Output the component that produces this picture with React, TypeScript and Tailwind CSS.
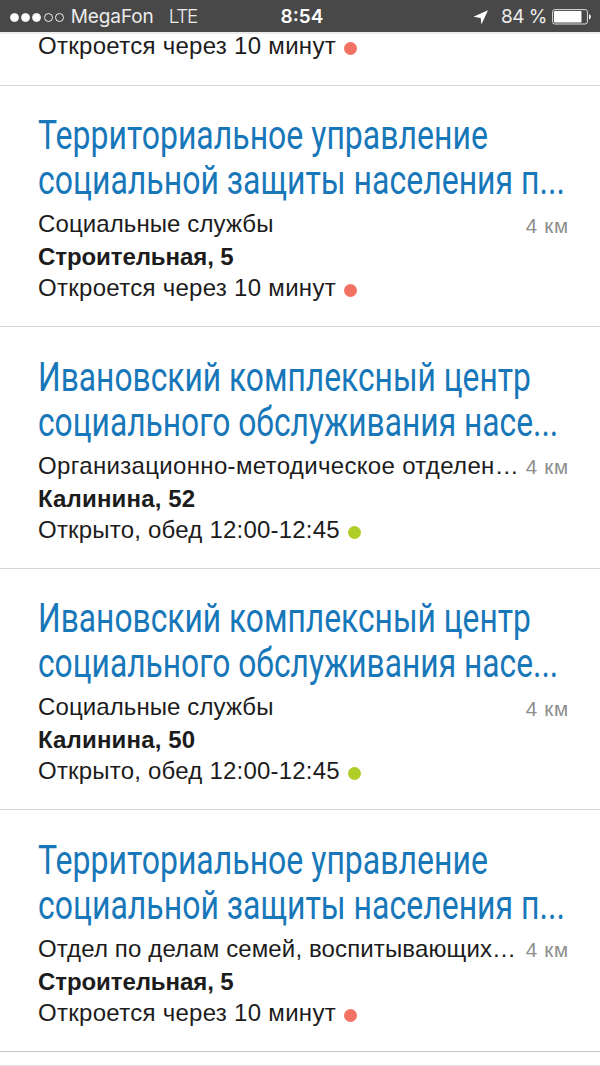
import clsx from "clsx";

interface Place {
  title: [string, string];
  titleScale: string;
  category: string;
  categoryTracking: string;
  address: string;
  addressTracking: string;
  hours: string;
  distance: string;
  open: boolean;
}

const places: Place[] = [
  {
    title: ["Территориальное управление", "социальной защиты населения п..."],
    titleScale: "scale-x-[0.8]",
    category: "Социальные службы",
    categoryTracking: "tracking-[0.1px]",
    address: "Строительная, 5",
    addressTracking: "tracking-[-0.08px]",
    hours: "Откроется через 10 минут",
    distance: "4 км",
    open: false,
  },
  {
    title: ["Ивановский комплексный центр", "социального обслуживания насе..."],
    titleScale: "scale-x-[0.794]",
    category: "Организационно-методическое отделен…",
    categoryTracking: "tracking-[0.33px]",
    address: "Калинина, 52",
    addressTracking: "tracking-[0.16px]",
    hours: "Открыто, обед 12:00-12:45",
    distance: "4 км",
    open: true,
  },
  {
    title: ["Ивановский комплексный центр", "социального обслуживания насе..."],
    titleScale: "scale-x-[0.794]",
    category: "Социальные службы",
    categoryTracking: "tracking-[0.1px]",
    address: "Калинина, 50",
    addressTracking: "tracking-[0.16px]",
    hours: "Открыто, обед 12:00-12:45",
    distance: "4 км",
    open: true,
  },
  {
    title: ["Территориальное управление", "социальной защиты населения п..."],
    titleScale: "scale-x-[0.8]",
    category: "Отдел по делам семей, воспитывающих…",
    categoryTracking: "tracking-[0.13px]",
    address: "Строительная, 5",
    addressTracking: "tracking-[-0.08px]",
    hours: "Откроется через 10 минут",
    distance: "4 км",
    open: false,
  },
];

function StatusBar() {
  return (
    <header className="grid h-8 shrink-0 grid-cols-3 items-center bg-[#484848] font-['Inter','Liberation_Sans',sans-serif] text-[19px] leading-8 text-[#ececec]">
      <div className="flex items-center whitespace-nowrap pl-2.5 pt-px">
        <div className="flex gap-[2.2px]">
          {[1, 2, 3, 4, 5].map((n) => (
            <span
              key={n}
              className={clsx(
                "size-[9px] rounded-full border border-[#ececec]",
                n <= 3 && "bg-white"
              )}
            />
          ))}
        </div>
        <span className="ml-[7px] tracking-[-0.1px]">MegaFon</span>
        <span className="ml-[15px] font-light tracking-[-1.4px]">LTE</span>
      </div>
      <div className="pl-1 pt-px text-center font-semibold text-white">8:54</div>
      <div className="flex items-center justify-end whitespace-nowrap pr-2 pt-px">
        <svg width="16" height="15" viewBox="0 0 16 15" className="mr-3">
          <path d="M15 .2 8.4 14.6 7.7 7.9.4 6.8Z" fill="#fff" />
        </svg>
        <span className="tracking-[-0.5px]">84 %</span>
        <svg width="40" height="16" viewBox="0 0 40 16" className="ml-[5px]">
          <rect x=".6" y=".6" width="34.8" height="14.4" rx="2.2" fill="none" stroke="#ddd" />
          <rect x="2" y="2" width="27.5" height="11.6" rx=".8" fill="#fff" />
          <path d="M37 5.2q1.8.4 1.8 2.6T37 10.4Z" fill="#fff" />
        </svg>
      </div>
    </header>
  );
}

function Hours({ text, open }: { text: string; open: boolean }) {
  return (
    <div className="flex h-[30px] items-center whitespace-nowrap leading-[30px]">
      <span className={open ? "tracking-[0.21px]" : "tracking-[0.29px]"}>{text}</span>
      <span
        className={clsx(
          "ml-2 mt-[5px] size-[13px] rounded-full",
          open ? "bg-[#b0cc26]" : "bg-[#f27364]"
        )}
      />
    </div>
  );
}

function PlaceCard({ place }: { place: Place }) {
  return (
    <li className="h-[241.4px] border-t border-[#d6d7da] pl-[38px] pr-8 pt-[27.4px]">
      <h2 className="whitespace-nowrap font-['Roboto','Liberation_Sans',sans-serif] text-[40px] leading-[45px] text-[#1777b9]">
        {place.title.map((line) => (
          <span key={line} className={clsx("block w-fit origin-left", place.titleScale)}>
            {line}
          </span>
        ))}
      </h2>
      <div className="mt-1 flex h-[33px] items-center justify-between whitespace-nowrap leading-[33px]">
        <span className={place.categoryTracking}>{place.category}</span>
        <span className="-mr-px mt-[3px] text-[20.5px] tracking-[0.8px] text-[#8e8e8e]">
          {place.distance}
        </span>
      </div>
      <div className={clsx("h-[33px] whitespace-nowrap font-bold leading-[33px]", place.addressTracking)}>
        {place.address}
      </div>
      <Hours text={place.hours} open={place.open} />
    </li>
  );
}

export default function App() {
  return (
    <div className="flex h-[1066px] w-[600px] flex-col overflow-hidden bg-white font-['Liberation_Sans',Arial,sans-serif] text-[24px] text-[#1c1c1c]">
      <StatusBar />
      <div className="h-[53px] shrink-0 border-t-2 border-[#ececec] pl-[38px]">
        <div className="-mt-[3px]">
          <Hours text="Откроется через 10 минут" open={false} />
        </div>
      </div>
      <ul className="shrink-0">
        {places.map((place, i) => (
          <PlaceCard key={i} place={place} />
        ))}
      </ul>
      <div className="h-[15px] shrink-0 border-t border-[#c8c8c8]">
        <div className="mt-[13px] h-px bg-[#e4e4e4]" />
      </div>
    </div>
  );
}
